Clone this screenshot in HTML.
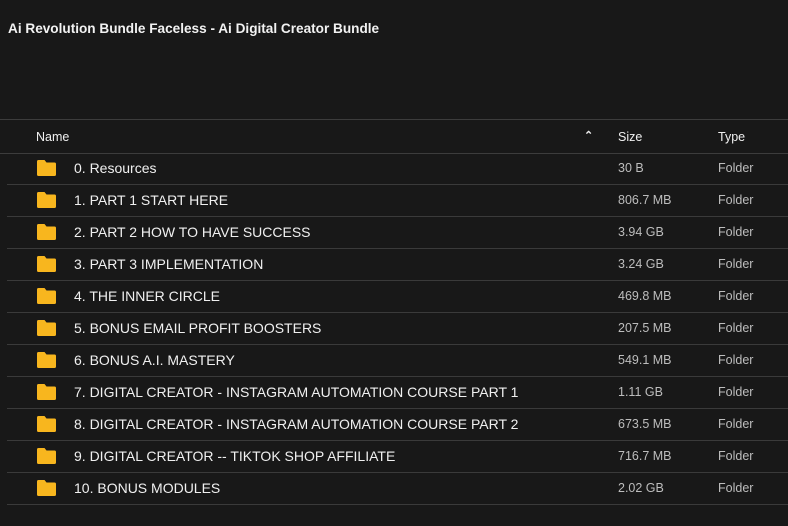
<!DOCTYPE html>
<html><head><style>
body{margin:0;width:788px;height:526px;background:#181818;font-family:"Liberation Sans",sans-serif;color:#e8e8e8;overflow:hidden;position:relative}
.title{position:absolute;left:8px;top:21px;font-size:13.6px;font-weight:bold;color:#f2f2f2}
.hdr{position:absolute;left:0;right:0;top:119px;height:33px;border-top:1px solid #3c3c3c;border-bottom:1px solid #3c3c3c;font-size:12.5px;color:#f0f0f0}
.hdr span{position:absolute;top:10px}
.row{position:absolute;left:7px;right:0;height:31px;border-bottom:1px solid #3a3a3a}
.row svg{position:absolute;left:30px;top:7px}
.n{position:absolute;left:67px;top:7px;font-size:14px;color:#f0f0f0}
.s{position:absolute;left:611px;top:8px;font-size:12.5px;color:#bdbdbd}
.t{position:absolute;left:711px;top:8px;font-size:12.5px;color:#bdbdbd}
</style></head><body>
<div class="title">Ai Revolution Bundle Faceless - Ai Digital Creator Bundle</div>
<div class="hdr"><span style="left:36px">Name</span><span style="left:584px;top:9px;font-size:11px;font-weight:bold">&#8963;</span><span style="left:618px">Size</span><span style="left:718px">Type</span></div>
<div id="rows"></div>
<script>
var d=[["0. Resources","30 B"],["1. PART 1 START HERE","806.7 MB"],["2. PART 2 HOW TO HAVE SUCCESS","3.94 GB"],["3. PART 3 IMPLEMENTATION","3.24 GB"],["4. THE INNER CIRCLE","469.8 MB"],["5. BONUS EMAIL PROFIT BOOSTERS","207.5 MB"],["6. BONUS A.I. MASTERY","549.1 MB"],["7. DIGITAL CREATOR - INSTAGRAM AUTOMATION COURSE PART 1","1.11 GB"],["8. DIGITAL CREATOR - INSTAGRAM AUTOMATION COURSE PART 2","673.5 MB"],["9. DIGITAL CREATOR -- TIKTOK SHOP AFFILIATE","716.7 MB"],["10. BONUS MODULES","2.02 GB"]];
var h="";d.forEach(function(r,i){h+='<div class="row" style="top:'+(153+i*32)+'px"><svg width="19" height="16" viewBox="0 0 19 16"><path d="M1.5 0h6l2 2.5h8a1.5 1.5 0 0 1 1.5 1.5v10.5a1.5 1.5 0 0 1-1.5 1.5h-16A1.5 1.5 0 0 1 0 14.5v-13A1.5 1.5 0 0 1 1.5 0z" fill="#f8b61e"/></svg><span class="n">'+r[0]+'</span><span class="s">'+r[1]+'</span><span class="t">Folder</span></div>'});
document.getElementById("rows").innerHTML=h;
</script>
</body></html>
